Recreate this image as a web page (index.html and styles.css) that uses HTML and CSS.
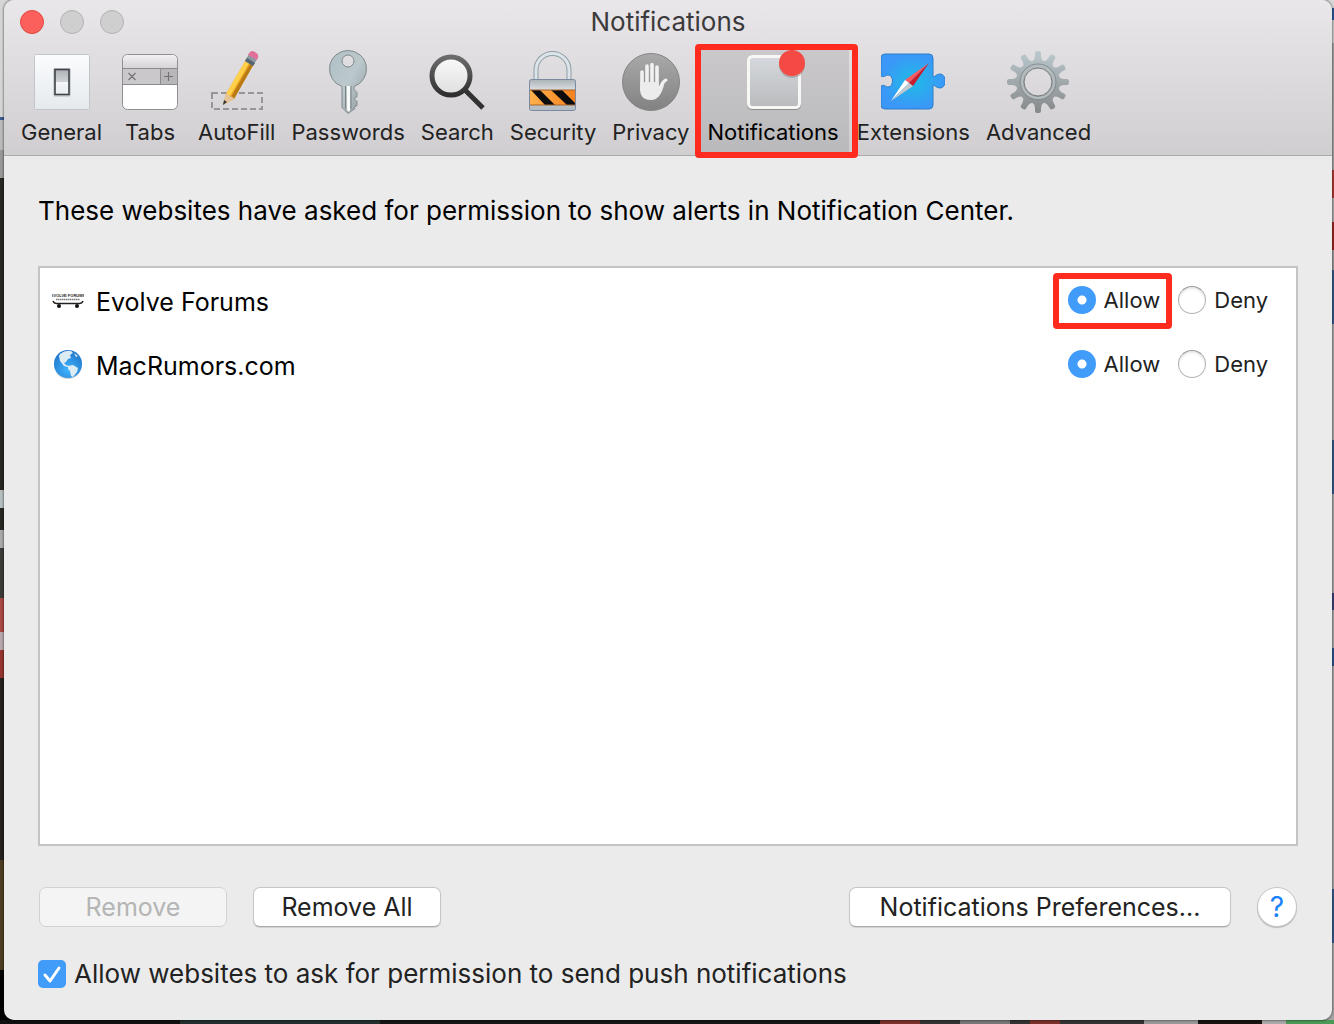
FILE: index.html
```html
<!DOCTYPE html>
<html lang="en">
<head>
<meta charset="utf-8">
<meta name="viewport" content="width=device-width, initial-scale=1">
<title>Notifications</title>
<link rel="stylesheet" href="styles.css">
</head>
<body>
<main class="window">
  <header class="chrome">
    <div class="titlebar">
      <div class="lights">
        <button class="light light-close" type="button" aria-label="Close"></button>
        <button class="light" type="button" aria-label="Minimize" disabled></button>
        <button class="light" type="button" aria-label="Zoom" disabled></button>
      </div>
      <h1 class="title">Notifications</h1>
    </div>
    <nav class="toolbar" aria-label="Preferences">
      <button class="tab" type="button">
        <svg class="icon" viewBox="0 0 64 64" aria-hidden="true">
          <defs>
            <linearGradient id="plate" x1="0" y1="0" x2="0" y2="1"><stop offset="0" stop-color="#fbfcfd"/><stop offset="1" stop-color="#e5eaee"/></linearGradient>
            <linearGradient id="rocker" x1="0" y1="0" x2="0" y2="1"><stop offset="0" stop-color="#aeb1b4"/><stop offset=".48" stop-color="#cfd2d5"/><stop offset=".5" stop-color="#f4f6f8"/><stop offset="1" stop-color="#e9edf0"/></linearGradient>
          </defs>
          <rect x="4.500" y="4.500" width="55" height="55" rx="1" fill="url(#plate)" stroke="#c2c5c9"/>
          <rect x="23" y="18" width="18" height="29" rx="2" fill="#cdd2d6"/>
          <rect x="25" y="19.500" width="14" height="25" fill="url(#rocker)" stroke="#3f4246" stroke-width="1.600"/>
        </svg>
        <span class="tab-label">General</span>
      </button>
      <button class="tab" type="button">
        <svg class="icon" viewBox="0 0 64 64" aria-hidden="true">
          <defs><linearGradient id="bar" x1="0" y1="0" x2="0" y2="1"><stop offset="0" stop-color="#f2f0f2"/><stop offset="1" stop-color="#d7d4d7"/></linearGradient></defs>
          <rect x="4.500" y="4.500" width="55" height="55" rx="5" fill="#fff" stroke="#8f8f91"/>
          <path d="M5 18V10a5 5 0 0 1 5-5h44a5 5 0 0 1 5 5v8z" fill="url(#bar)"/>
          <path d="M5 18h54v17H5z" fill="#cac8ca"/>
          <path d="M42 18h17v17H42z" fill="#b8b6b8"/>
          <path d="M4 18.500h56M4 34.500h56M42.500 18v17" stroke="#8b8a8c" fill="none"/>
          <path d="M10.500 23l7 7m0-7l-7 7M46 26.500h9M50.500 22v9" stroke="#737274" stroke-width="1.200" fill="none"/>
        </svg>
        <span class="tab-label">Tabs</span>
      </button>
      <button class="tab" type="button">
        <svg class="icon" viewBox="0 0 64 64" aria-hidden="true">
          <path d="M7 43h50v16H7z" fill="none" stroke="#979597" stroke-width="2" stroke-dasharray="6 3"/>
          <path d="M18 55l3-11L42 8l8 4-21 37z" fill="#e9a51e"/>
          <path d="M21 44L42 8l4 2-21 36z" fill="#ffd04a"/>
          <path d="M47 11l3 1-21 37-3-2z" fill="#b97a16"/>
          <path d="M18 55l3-11c2 0 4 1 4 3 2-1 3 0 4 2z" fill="#e6c49a"/>
          <path d="M18 55l1-5 3 2z" fill="#333"/>
          <path d="M40 11l4-7 8 5-4 7z" fill="#8d98a3"/>
          <path d="M40 11l2-3 8 5-2 3z" fill="#566573"/>
          <path d="M43 5c2-4 4-5 7-3 4 2 4 5 2 8z" fill="#e0719b"/>
        </svg>
        <span class="tab-label">AutoFill</span>
      </button>
      <button class="tab" type="button">
        <svg class="icon" viewBox="0 0 64 64" aria-hidden="true">
          <defs><linearGradient id="key" x1="0" y1="0" x2="1" y2="1"><stop offset="0" stop-color="#aebfc4"/><stop offset=".5" stop-color="#bcc9cc"/><stop offset="1" stop-color="#8e989b"/></linearGradient></defs>
          <path fill-rule="evenodd" d="M32 .500a18.500 18.500 0 0 1 6 36v3l3 3v4l-3 2 3 3v4l-3 2 1 1-7 5-6-6V36.500A18.500 18.500 0 0 1 32 .500zM32 5a6 6 0 1 0 0 12 6 6 0 0 0 0-12z" fill="url(#key)" stroke="#7f898c"/>
          <path d="M31 36h3v24l-1 2-2-2z" fill="#f7f9f9"/>
          <path d="M29.500 36v23M35 36v23" stroke="#7d8588" stroke-width="1"/>
        </svg>
        <span class="tab-label">Passwords</span>
      </button>
      <button class="tab" type="button">
        <svg class="icon" viewBox="0 0 64 64" aria-hidden="true">
          <defs>
            <linearGradient id="rim" x1="0" y1="0" x2="0" y2="1"><stop offset="0" stop-color="#6b6b6b"/><stop offset="1" stop-color="#2f2f2f"/></linearGradient>
            <linearGradient id="glass" x1="0" y1="0" x2="0" y2="1"><stop offset="0" stop-color="#fafafa"/><stop offset="1" stop-color="#e0dee0"/></linearGradient>
          </defs>
          <path d="M40 40l18 18" stroke="#323232" stroke-width="5"/>
          <circle cx="26" cy="26" r="19" fill="url(#glass)" stroke="url(#rim)" stroke-width="5"/>
        </svg>
        <span class="tab-label">Search</span>
      </button>
      <button class="tab" type="button">
        <svg class="icon" viewBox="0 0 64 64" aria-hidden="true">
          <defs>
            <linearGradient id="lock" x1="0" y1="0" x2="0" y2="1"><stop offset="0" stop-color="#aab3b9"/><stop offset=".3" stop-color="#d5dadd"/><stop offset="1" stop-color="#b2bbc2"/></linearGradient>
            <linearGradient id="hazard" x1="0" y1="0" x2="1" y2="0"><stop offset="0" stop-color="#ffb04a"/><stop offset="1" stop-color="#f5821f"/></linearGradient>
          </defs>
          <path d="M15 30V20a16.500 16.500 0 0 1 33 0v10" fill="none" stroke="#8f9da6" stroke-width="5"/>
          <path d="M15 30V20a16.500 16.500 0 0 1 33 0v10" fill="none" stroke="#dbe5e9" stroke-width="3"/>
          <rect x="8.500" y="29.500" width="46" height="31" rx="2" fill="url(#lock)" stroke="#7b8aa0"/>
          <path d="M9 40h45v15H9z" fill="url(#hazard)"/>
          <path d="M10 40h9l15 15H24zM30 40h11l13 13v2h-8z" fill="#0c0c0c"/>
          <path d="M9 40h45M9 55h45" stroke="#a5622d" stroke-width="1"/>
        </svg>
        <span class="tab-label">Security</span>
      </button>
      <button class="tab" type="button">
        <svg class="icon" viewBox="0 0 64 64" aria-hidden="true">
          <defs><linearGradient id="disc" x1="0" y1="0" x2="0" y2="1"><stop offset="0" stop-color="#a9a9a9"/><stop offset="1" stop-color="#828282"/></linearGradient></defs>
          <circle cx="32" cy="32" r="28.500" fill="url(#disc)" stroke="#858585"/>
          <g fill="none" stroke="#f1f1f1" stroke-width="3.600" stroke-linecap="round">
            <path d="M23 22v18M28 16v20M33 14.500v20M38 17v20"/>
            <path d="M41 38q3-7 6-8" stroke-width="3"/>
          </g>
          <path d="M21.200 32h18.600v4l2 2 4-6q-2 9-5 13-3 5-9 5c-7 0-10.600-4-10.600-10z" fill="#ececec"/>
        </svg>
        <span class="tab-label">Privacy</span>
      </button>
      <button class="tab tab-selected" type="button" aria-current="page">
        <svg class="icon" viewBox="0 0 64 64" aria-hidden="true">
          <defs><linearGradient id="tile" x1="0" y1="0" x2="0" y2="1"><stop offset="0" stop-color="#d6d9dd"/><stop offset="1" stop-color="#b9bbbd"/></linearGradient></defs>
          <rect x="6" y="7" width="54" height="53" rx="5" fill="#8e8e8e"/>
          <rect x="7.500" y="6.500" width="51" height="51" rx="4" fill="url(#tile)" stroke="#f7f7f5" stroke-width="3"/>
          <circle cx="51" cy="15" r="13" fill="#8b6b6b" opacity=".4"/>
          <circle cx="51" cy="13" r="13" fill="#f44a46"/>
        </svg>
        <span class="tab-label">Notifications</span>
      </button>
      <button class="tab" type="button">
        <svg class="icon" viewBox="0 0 64 64" aria-hidden="true">
          <defs><radialGradient id="puzzle"><stop offset="0" stop-color="#1fbbe6"/><stop offset="1" stop-color="#3b97f8"/></radialGradient></defs>
          <path d="M4 4h44q4 0 4 4v19c2 0 3-3 7-3 7 0 7 14 0 14-4 0-5-3-7-3v20q0 4-4 4H4q-4 0-4-4V36c4-2 4 1 7 1 6 0 6-12 0-12-3 0-3 3-7 1V8q0-4 4-4z" fill="url(#puzzle)" stroke="#2d7ecb" stroke-width="1"/>
          <path d="M48 13L24 30l4 3z" fill="#ff5a5f"/>
          <path d="M48 13L32 36l-4-3z" fill="#c81d2b"/>
          <path d="M10 51l14-21 4 3z" fill="#fff"/>
          <path d="M10 51l22-15-4-3z" fill="#c4c9cd"/>
        </svg>
        <span class="tab-label">Extensions</span>
      </button>
      <button class="tab" type="button">
        <svg class="icon" viewBox="0 0 64 64" aria-hidden="true">
          <defs>
            <linearGradient id="steel" gradientUnits="userSpaceOnUse" x1="0" y1="0" x2="0" y2="64"><stop offset="0" stop-color="#bccacf"/><stop offset="1" stop-color="#858789"/></linearGradient>
          </defs>
          <mask id="gear">
            <g fill="#fff">
              <circle cx="32" cy="32" r="22"/>
              <path id="teeth" d="M27 11q2-2 2-5V3q0-2 3-2t3 2v3q0 3 2 5v42q-2 2-2 5v3q0 2-3 2t-3-2v-3q0-3-2-5z"/>
              <use href="#teeth" transform="rotate(30 32 32)"/>
              <use href="#teeth" transform="rotate(60 32 32)"/>
              <use href="#teeth" transform="rotate(90 32 32)"/>
              <use href="#teeth" transform="rotate(120 32 32)"/>
              <use href="#teeth" transform="rotate(150 32 32)"/>
            </g>
            <circle cx="32" cy="32" r="14" fill="#000"/>
          </mask>
          <rect width="64" height="64" fill="url(#steel)" mask="url(#gear)"/>
          <circle cx="32" cy="32" r="18" fill="none" stroke="#868d8f" stroke-width="1"/>
          <circle cx="32" cy="32" r="16" fill="none" stroke="#b4bcbe" stroke-width="2"/>
          <circle cx="32" cy="32" r="14" fill="none" stroke="#777b7d"/>
        </svg>
        <span class="tab-label">Advanced</span>
      </button>
    </nav>
  </header>

  <section class="content">
    <p class="intro">These websites have asked for permission to show alerts in Notification Center.</p>

    <ul class="sites">
      <li class="site">
        <svg class="favicon" viewBox="0 0 64 64" aria-hidden="true">
          <text class="favicon-text" x="32" y="25" text-anchor="middle">EVOLVE FORUMS</text>
          <path d="M8 31h48" stroke="#777" stroke-width="3" stroke-dasharray="3 1"/>
          <path d="M2 34q2 5 7 5h46q5 0 7-5" fill="none" stroke="#222" stroke-width="3"/>
          <circle cx="14" cy="44" r="4" fill="#111"/><circle cx="50" cy="44" r="4" fill="#111"/>
        </svg>
        <span class="site-name">Evolve Forums</span>
        <label class="choice choice-marked"><input class="radio" type="radio" name="evolve" checked>Allow</label>
        <label class="choice"><input class="radio" type="radio" name="evolve">Deny</label>
      </li>
      <li class="site">
        <svg class="favicon" viewBox="0 0 32 32" aria-hidden="true">
          <defs><radialGradient id="globe" cx=".5" cy=".7" r=".7"><stop offset="0" stop-color="#3fb4ff"/><stop offset="1" stop-color="#1f74c8"/></radialGradient></defs>
          <circle cx="16" cy="17" r="14" fill="#000" opacity=".18"/>
          <circle cx="16" cy="16" r="14" fill="url(#globe)"/>
          <path d="M8 6q5-4 11-3l2 2-3 2 1 3-3 1-2 3-2 1 2 2 3 1-1 1-4-1-4-5-1-5zM22 5l4 3-2 1zM16 18l5-1 5 3-1 4-4 5-2-1-1-5-2-2z" fill="#dcecf4"/>
        </svg>
        <span class="site-name">MacRumors.com</span>
        <label class="choice"><input class="radio" type="radio" name="macrumors" checked>Allow</label>
        <label class="choice"><input class="radio" type="radio" name="macrumors">Deny</label>
      </li>
    </ul>

    <div class="actions">
      <button class="button" type="button" disabled>Remove</button>
      <button class="button" type="button">Remove All</button>
      <button class="button button-wide" type="button">Notifications Preferences...</button>
      <button class="help" type="button" aria-label="Help">?</button>
    </div>

    <label class="push"><input class="checkbox" type="checkbox" checked>Allow websites to ask for permission to send push notifications</label>
  </section>
</main>
</body>
</html>
```
FILE: styles.css
```css
* {
  box-sizing: border-box;
}

/* Slivers of the desktop show on the left, right and bottom of the window. */
body {
  margin: 0;
  min-height: 100vh;
  display: flex;
  padding: 0 2px 4px 4px;
  font-family: Inter, "Liberation Sans", sans-serif;
  font-size: 25px;
  line-height: 32px;
  color: #222;
  background-color: #aaa;
  background-image:
    linear-gradient(90deg, #111 0 180px, #243030 180px 380px, #161616 380px 880px, #7b3029 880px 920px, #333 920px 960px, #777 960px 1010px, #333 1010px 1030px, #7b3029 1030px 1060px, #333 1060px 1144px, #999 1144px 1198px, #181512 1198px 1262px, #aaa 1262px 1286px, #4c9a58 1286px),
    linear-gradient(#d6d6d6 0 117px, #3c5a91 117px 120px, #bbb 120px 150px, #999 150px 178px, #292724 178px 490px, #b5bfc0 490px 508px, #292724 508px 530px, #aaa 530px 548px, #3d3b38 548px 598px, #a94743 598px 632px, #b9a8ac 632px 650px, #96352f 650px 678px, #24211f 678px 860px, #4d3c22 860px 970px, #000 970px),
    linear-gradient(#d8d8d8 0 8px, #2a5a9c 8px 20px, #ccc 20px 43px, #a2a2a2 43px 170px, #ad3a34 170px 198px, #aaa 198px 222px, #992622 222px 250px, #999 250px 270px, #365a8e 270px 324px, #a4a4a4 324px 440px, #365a8e 440px 494px, #a4a4a4 494px 593px, #3b4479 593px 610px, #a4a4a4 610px 648px, #2d5590 648px 666px, #a4a4a4 666px 889px, #365a8e 889px 943px, #a4a4a4 943px);
  background-repeat: no-repeat;
  background-position: 0 100%, 0 0, 100% 0;
  background-size: 100% 4px, 12px 100%, 12px 100%;
}

button,
input {
  margin: 0;
  padding: 0;
  border: 0;
  font: inherit;
  color: inherit;
  appearance: none;
}

.window {
  flex: 1;
  display: flex;
  flex-direction: column;
  border-radius: 10px;
  background: #ebebeb;
  box-shadow: 0 0 2px 1px rgba(0, 0, 0, 0.35);
}

.chrome {
  border-bottom: 1px solid #aba9ab;
  border-radius: 10px 10px 0 0;
  background: linear-gradient(#e9e7e9, #d0ced0);
}

.titlebar {
  display: grid;
  grid-template-columns: 1fr auto 1fr;
  align-items: center;
  height: 44px;
  padding: 0 16px;
}

.lights {
  display: flex;
  gap: 16px;
}

.light {
  width: 24px;
  height: 24px;
  border: 1px solid #b4b2b4;
  border-radius: 50%;
  background: #cfcfcf;
}

.light-close {
  border-color: #e2463f;
  background: #fc605c;
}

.title {
  margin: 0;
  font-size: 26px;
  font-weight: 400;
  color: #3c3a3c;
}

.toolbar {
  display: flex;
  padding: 0 9px;
}

.tab {
  position: relative;
  display: flex;
  flex-direction: column;
  align-items: center;
  gap: 4px;
  height: 111px;
  padding: 6px 8px 0;
  background: none;
  font-size: 22px;
}

.icon {
  display: block;
  width: 64px;
  height: 64px;
}

.tab-label {
  line-height: 28px;
}

.tab-selected {
  padding: 6px 10px 0;
  background: linear-gradient(#cbc9cb, #b9b8ba);
  color: #000;
}

/* Red call-out frames around the controls being pointed at. */
.tab-selected::after,
.choice-marked::after {
  content: "";
  position: absolute;
  z-index: 1;
  border: 6px solid #fe2b1e;
  border-radius: 4px;
  pointer-events: none;
}

.tab-selected::after {
  inset: 0 -9px -3px -2px;
}

.content {
  flex: 1;
  display: flex;
  flex-direction: column;
  padding: 39px 34px 30px;
}

.intro {
  margin: 0;
  font-size: 26px;
  color: #000;
}

.sites {
  flex: 1;
  margin: 39px 0 41px;
  padding: 0 28px 0 12px;
  border: 2px solid #c4c4c4;
  background: #fff;
  list-style: none;
}

.site {
  display: flex;
  align-items: center;
  height: 64px;
}

.favicon {
  width: 32px;
  height: 32px;
}

.favicon-text {
  font: 700 8px "Liberation Sans", sans-serif;
  fill: #222;
}

.site-name {
  flex: 1;
  padding: 3px 0 0 12px;
  color: #000;
}

.choice {
  position: relative;
  display: flex;
  align-items: center;
  gap: 8px;
  margin-left: 18px;
  font-size: 22px;
}

.choice-marked::after {
  inset: -11px -12px -13px -15px;
}

.radio {
  width: 28px;
  height: 28px;
  border: 1px solid #b3b3b3;
  border-top-color: #999;
  border-radius: 50%;
  background: #fff;
  box-shadow: inset 0 2px 2px #e8e8e8;
}

.radio:checked {
  border: 0;
  background: radial-gradient(circle, #fff 0 4px, #419bf9 5px);
  box-shadow: none;
}

.actions {
  display: flex;
  align-items: center;
  gap: 26px;
  padding: 0 1px;
}

.button {
  width: 188px;
  height: 40px;
  border: 1px solid #c6c6c6;
  border-bottom-color: #aaa;
  border-radius: 7px;
  background: #fff;
  box-shadow: 0 1px 1px #d0d0d0;
}

.button:disabled {
  border-color: #d2d2d2;
  background: #f4f4f4;
  box-shadow: none;
  color: #b5b5b5;
}

.button-wide {
  width: 382px;
  margin-left: auto;
}

.help {
  width: 40px;
  height: 40px;
  border: 1px solid #c6c6c6;
  border-radius: 50%;
  background: #fff;
  box-shadow: 0 1px 1px #bbb;
  font-size: 28px;
  color: #1a82fb;
}

.push {
  display: flex;
  align-items: center;
  align-self: flex-start;
  gap: 8px;
  margin-top: 31px;
  font-size: 26px;
}

.checkbox {
  width: 28px;
  height: 28px;
  border-radius: 5px;
  background: #419bf9 url("data:image/svg+xml,%3Csvg xmlns='http://www.w3.org/2000/svg' viewBox='0 0 28 28'%3E%3Cpath d='M7 15l5 6 9-13' fill='none' stroke='white' stroke-width='3' stroke-linecap='round' stroke-linejoin='round'/%3E%3C/svg%3E");
}
```
